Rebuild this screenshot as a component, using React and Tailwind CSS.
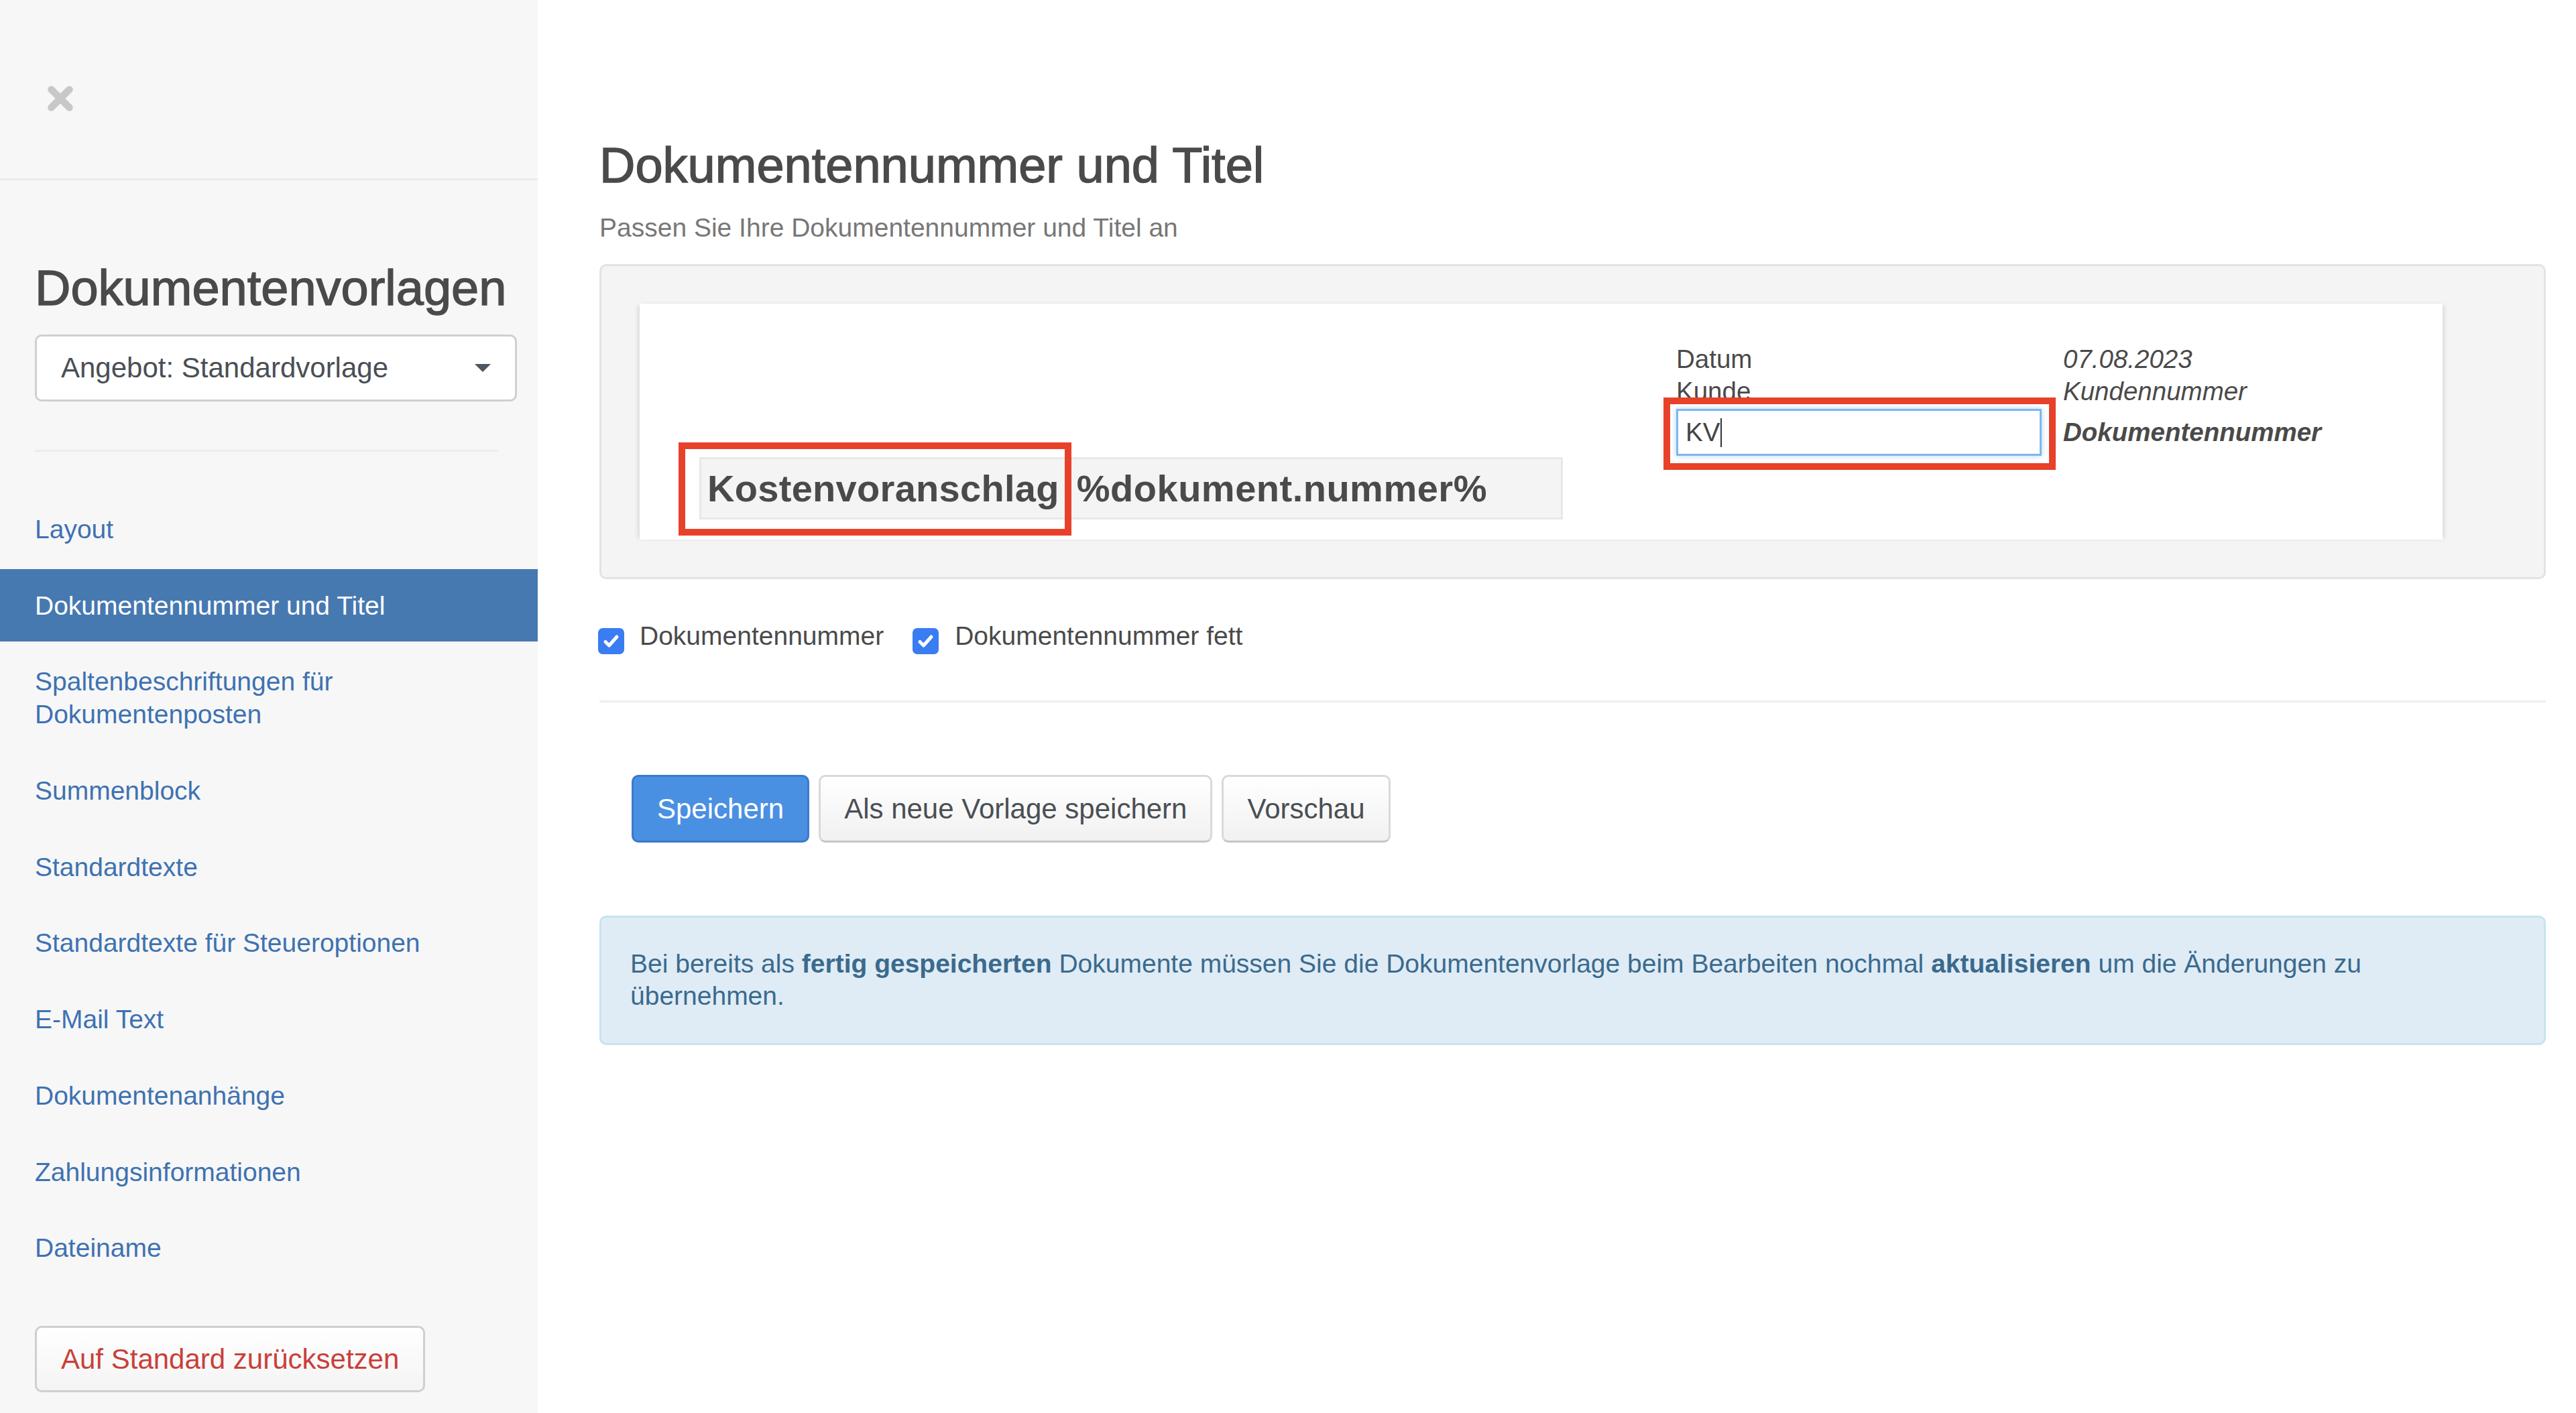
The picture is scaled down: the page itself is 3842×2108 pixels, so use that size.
import React from "react";

const navItems = [
  { label: "Layout" },
  { label: "Dokumentennummer und Titel", active: true },
  { label: ["Spaltenbeschriftungen für", "Dokumentenposten"] },
  { label: "Summenblock" },
  { label: "Standardtexte" },
  { label: "Standardtexte für Steueroptionen" },
  { label: "E-Mail Text" },
  { label: "Dokumentenanhänge" },
  { label: "Zahlungsinformationen" },
  { label: "Dateiname" },
];

function CloseIcon() {
  return (
    <svg width="38" height="38" viewBox="0 0 38 38" fill="none">
      <path d="M5.5 5.5 L32.5 32.5 M32.5 5.5 L5.5 32.5" stroke="#c8c8c8" strokeWidth="10.5" strokeLinecap="round" />
    </svg>
  );
}

function CheckBox({ className = "" }) {
  return (
    <span className={`flex h-[39px] w-[39px] shrink-0 items-center justify-center rounded-[7px] bg-[#3a7cf2] ${className}`}>
      <svg width="27" height="27" viewBox="0 0 27 27" fill="none">
        <path d="M5 14.5 L10.5 20 L22 7" stroke="white" strokeWidth="5" strokeLinecap="round" strokeLinejoin="round" />
      </svg>
    </span>
  );
}

export default function App() {
  return (
    <div className="flex min-h-[2108px] w-full bg-white font-['Liberation_Sans',Arial,sans-serif]">
      {/* Sidebar */}
      <aside className="flex w-[802px] shrink-0 flex-col bg-[#f7f7f7]">
        <div className="h-[269px] border-b-[3px] border-[#ebebeb] pl-[71px] pt-[128px]">
          <CloseIcon />
        </div>

        <div className="pl-[52px]">
          <h2 className="mt-[120px] text-[74px] leading-[81px] text-[#4a4a4a] [-webkit-text-stroke:1.4px_#4a4a4a]">
            Dokumentenvorlagen
          </h2>
          <div className="mt-[29px] flex h-[100px] w-[719px] items-center justify-between rounded-[10px] border-[3px] border-[#d0d0d0] bg-white pl-[36px] pr-[36px]">
            <span className="text-[42px] leading-[50px] text-[#4a4f55]">Angebot: Standardvorlage</span>
            <svg width="24" height="12" viewBox="0 0 24 12">
              <polygon points="0,0 24,0 12,12" fill="#4d5660" />
            </svg>
          </div>
          <div className="mt-[72px] h-[3px] w-[690px] bg-[#ececec]" />
        </div>

        <nav className="mt-[61px] flex flex-col gap-[5.7px]">
          {navItems.map((item, i) => (
            <a
              key={i}
              className={`block px-[52px] pb-[29px] pt-[30px] text-[39px] leading-[49px] ${
                item.active ? "bg-[#4779b1] text-white" : "text-[#3e72b1]"
              }`}
            >
              {Array.isArray(item.label) ? (
                <>
                  {item.label[0]}
                  <br />
                  {item.label[1]}
                </>
              ) : (
                item.label
              )}
            </a>
          ))}
        </nav>

        <div className="mt-[63px] pl-[52px]">
          <button className="h-[99px] w-[582px] rounded-[10px] border-[3px] border-[#cfcfcf] bg-gradient-to-b from-white to-[#f4f4f4] pl-[36px] text-left text-[42px] text-[#c9403a]">
            Auf Standard zurücksetzen
          </button>
        </div>
      </aside>

      {/* Main content */}
      <main className="flex-1 pl-[92px] pr-[45px]">
        <h1 className="mt-[206px] text-[74px] leading-[81px] text-[#4a4a4a] [-webkit-text-stroke:1.4px_#4a4a4a]">
          Dokumentennummer und Titel
        </h1>
        <p className="mt-[28px] text-[39px] leading-[49px] text-[#777777]">
          Passen Sie Ihre Dokumentennummer und Titel an
        </p>

        {/* Preview well */}
        <div className="mt-[30px] h-[470px] rounded-[10px] border-[3px] border-[#e3e3e3] bg-[#f4f4f4] pl-[57px] pt-[56px]">
          <div className="flex h-[352px] w-[2689px] items-start bg-white shadow-[-5px_0_6px_-2px_rgba(0,0,0,0.10),5px_0_6px_-2px_rgba(0,0,0,0.10)]">
            {/* Document title */}
            <div className="relative ml-[89px] mt-[229px] flex h-[93px] w-[1288px] items-center border-[3px] border-[#e8e8e8] bg-[#f4f4f4] pl-[9px] text-[56px] font-bold text-[#4a4a4a]">
              <span className="tracking-[0.3px]">Kostenvoranschlag</span>
              <span className="ml-[26px] tracking-[0.5px]">%dokument.nummer%</span>
              <div className="absolute left-[-34px] top-[-25px] h-[139px] w-[586px] border-[10px] border-[#e8412a]" />
            </div>

            {/* Document meta */}
            <div className="ml-[169px] mt-[59px] text-[38.5px] leading-[48px] text-[#4a4a4a]">
              <div className="flex">
                <span className="w-[577px]">Datum</span>
                <span className="italic">07.08.2023</span>
              </div>
              <div className="flex">
                <span className="w-[577px]">Kunde</span>
                <span className="italic">Kundennummer</span>
              </div>
              <div className="mt-[2px] flex h-[70px] items-center">
                <div className="relative flex h-[70px] w-[545px] items-center border-[3px] border-[#7db7ee] bg-white pl-[11px] shadow-[0_0_8px_rgba(102,175,233,0.55)]">
                  <span className="text-[#444]">KV</span>
                  <span className="ml-[1px] h-[43px] w-[2px] bg-[#333]" />
                  <div className="absolute left-[-22px] top-[-20px] h-[108px] w-[585px] border-[10px] border-[#e8412a]" />
                </div>
                <span className="ml-[32px] font-bold italic">Dokumentennummer</span>
              </div>
            </div>
          </div>
        </div>

        {/* Options */}
        <div className="mt-[60px] flex items-start text-[39px] leading-[49px] text-[#4a4a4a]">
          <CheckBox className="-ml-[2px] mt-[13px]" />
          <span className="ml-[23px]">Dokumentennummer</span>
          <CheckBox className="ml-[43px] mt-[13px]" />
          <span className="ml-[24px]">Dokumentennummer fett</span>
        </div>

        <div className="mt-[69px] h-[3px] bg-[#eeeeee]" />

        {/* Actions */}
        <div className="mt-[108px] flex gap-[14px] pl-[48px]">
          <button className="h-[101px] rounded-[10px] border-[3px] border-[#3a7acb] bg-[#4a90e2] px-[35px] text-[42px] text-white">
            Speichern
          </button>
          <button className="h-[101px] rounded-[10px] border-[3px] border-[#d9d9d9] border-b-[#c6c6c6] bg-gradient-to-b from-white to-[#f1f1f1] px-[35px] text-[42px] text-[#4a4f55]">
            Als neue Vorlage speichern
          </button>
          <button className="h-[101px] rounded-[10px] border-[3px] border-[#d9d9d9] border-b-[#c6c6c6] bg-gradient-to-b from-white to-[#f1f1f1] px-[35px] text-[42px] text-[#4a4f55]">
            Vorschau
          </button>
        </div>

        {/* Notice */}
        <div className="mt-[109px] h-[193px] rounded-[10px] border-[3px] border-[#c6e4ee] bg-[#dfecf6] pl-[43px] pt-[45px] text-[39px] leading-[48px] text-[#3b6a8d]">
          Bei bereits als <b>fertig gespeicherten</b> Dokumente müssen Sie die Dokumentenvorlage beim Bearbeiten nochmal{" "}
          <b>aktualisieren</b> um die Änderungen zu
          <br />
          übernehmen.
        </div>
      </main>
    </div>
  );
}
